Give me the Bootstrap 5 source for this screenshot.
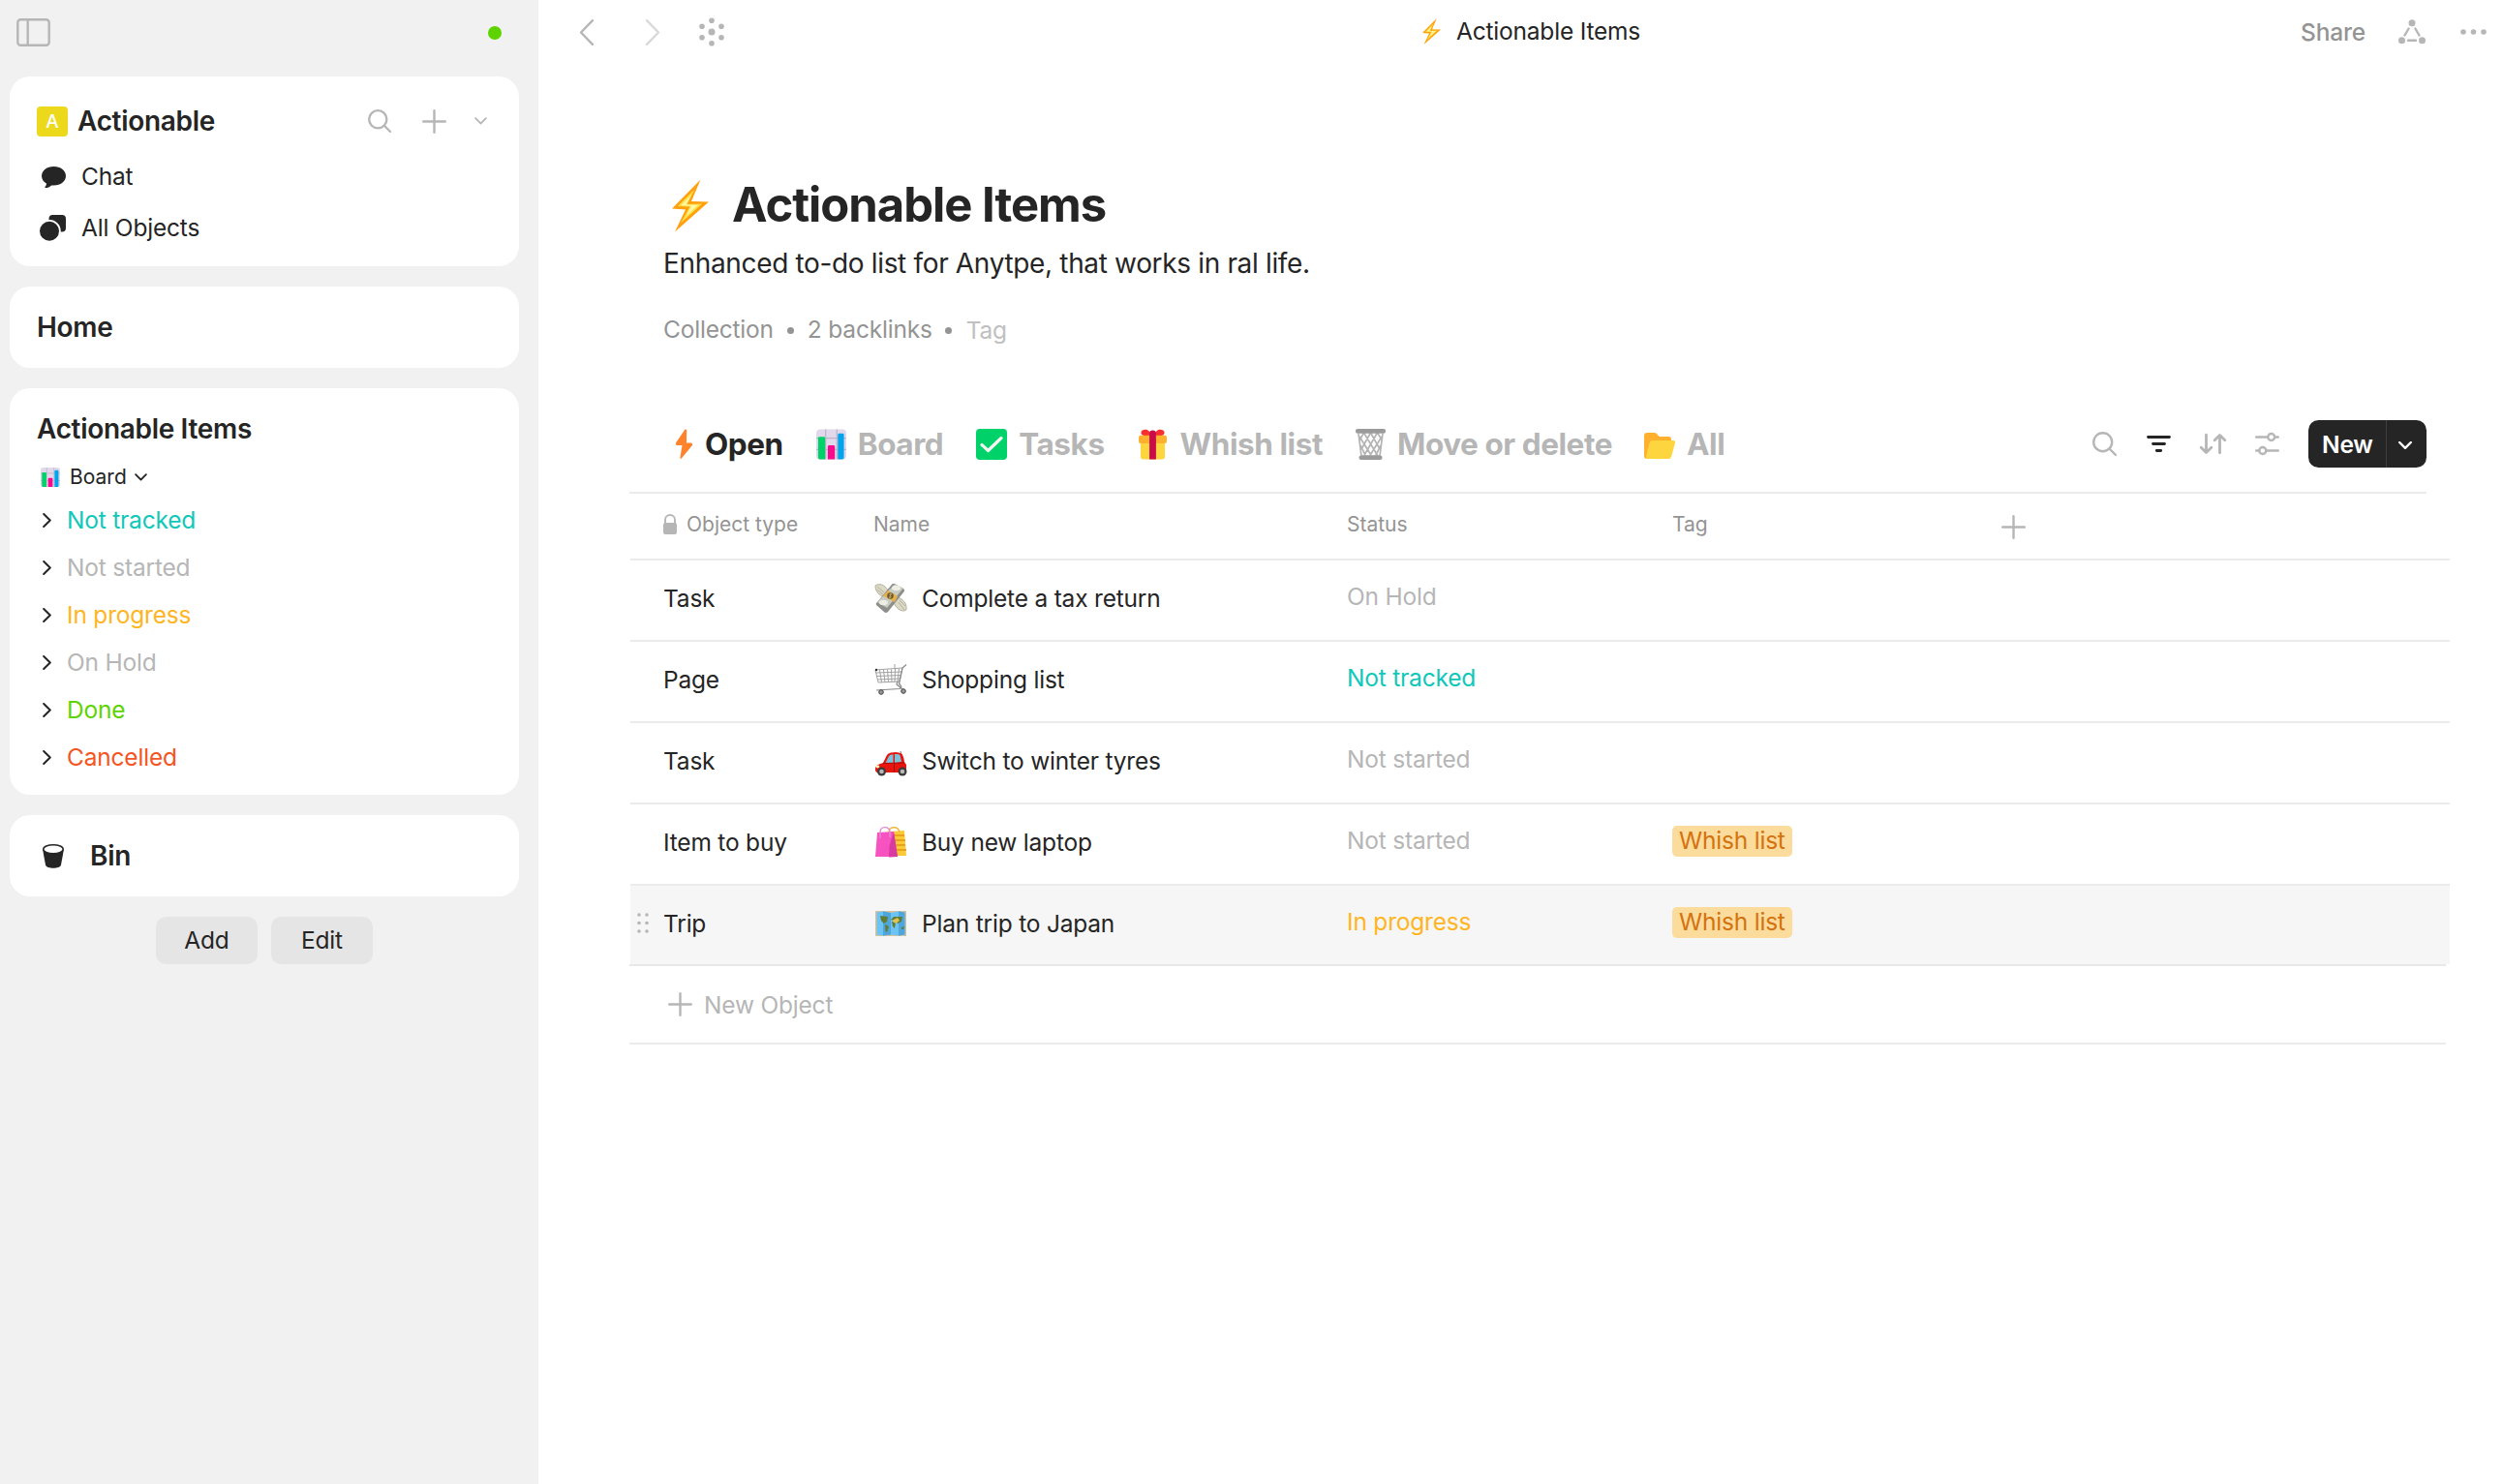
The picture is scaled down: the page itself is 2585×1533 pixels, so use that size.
<!DOCTYPE html>
<html lang="en">
<head>
<meta charset="utf-8">
<meta name="viewport" content="width=device-width, initial-scale=1">
<title>Actionable Items</title>
<link href="https://cdn.jsdelivr.net/npm/bootstrap@5.3.0/dist/css/bootstrap.min.css" rel="stylesheet">
<style>
:root{--ink:#252525;--muted:#949494;--soft:#b6b6b6;--line:#ebebeb}
body{font-family:Inter,"Liberation Sans",sans-serif;font-size:24.5px;line-height:32px;letter-spacing:-.2px;color:var(--ink);background:#fff;overflow:hidden;-webkit-font-smoothing:antialiased}
svg{display:block;flex:none;overflow:visible}
.ico{fill:none;stroke:var(--soft);stroke-width:2.4;stroke-linecap:round;stroke-linejoin:round}
.dk{stroke:var(--ink)}
.side{width:556px;height:1533px;background:#f1f1f1}
.side-head{height:79px;padding:19px 38px 0 17px}
.dot{width:14px;height:14px;border-radius:50%;background:#5dd400;margin-top:8px}
.widget{width:526px;margin:0 0 21px 10px;border-radius:21px;background:#fff;padding:0 28px}
.ttl{font-size:28px;font-weight:600;line-height:36px;letter-spacing:-.32px}
.space-ic{width:32px;height:31px;border-radius:4px;background:#ecd91b;color:#fff;font-size:19px;font-weight:500;line-height:31px}
.nav-l{height:53px}
.grp{height:49px}
.grp span{margin:0 0 1px 16px}
.teal{color:#0fc8ba}.grey{color:var(--soft)}.yel{color:#ffb522}.grn{color:#5dd400}.red{color:#f55522}
.btn-s{width:105px;height:49px;border-radius:10.5px;background:#e5e5e5;color:var(--ink);font-size:24.5px;padding:0;border:0;letter-spacing:-.2px}
.top{height:66px}
.page{padding-left:94px}
h1{font-size:49px;font-weight:700;letter-spacing:-1.04px;line-height:56px;margin:0}
.desc{font-size:28px;line-height:42px;letter-spacing:-.34px;margin-top:11px}
.meta{margin-top:28px;height:38px;color:var(--muted)}
.bul{width:7px;height:7px;border-radius:50%;background:var(--muted);margin-top:2px}
.views{width:1856px;height:76px;margin-top:75px;border-bottom:2px solid var(--line);padding-bottom:25px}
.vtab{font-size:31.5px;font-weight:700;letter-spacing:-.44px;color:var(--soft);line-height:49px;white-space:nowrap}
.new-btn{width:122px;height:49px;border-radius:10.5px;background:var(--ink);color:#fff;font-weight:600;overflow:hidden}
.new-btn .lbl{width:80px;padding-left:14px}
.new-btn .arr{width:42px;height:49px;border-left:1px solid #3f3f3f;padding-right:3px}
.grid{width:1879px;margin-left:1px}
.g-row{height:84px;border-bottom:2px solid var(--line)}
.g-head{height:69px;font-size:21px;letter-spacing:0;color:var(--muted);padding-bottom:4px}
.g-row .c1{width:227px;padding-left:34px}
.g-row .c2{width:489px;padding-left:25px}
.g-row .c3{width:336px;padding-left:24px}
.g-row .c4{width:336px;padding-left:24px}
.g-row:not(.g-head) .c1,.g-row:not(.g-head) .c2{padding-bottom:4px}
.g-row:not(.g-head) .c3{padding-bottom:8px}
.g-row:not(.g-head) .c4{padding-bottom:6px}
.hov{background:#f6f6f6;border-bottom:0}
.g-row.hov{height:81px}
.g-row.hov .c1{padding-left:7px}
.tagp{background:#fcdc9c;color:#d4720f;border-radius:5px;height:32px;padding:0 7px;line-height:31px}
.add{width:1876px;height:83px;border-top:2px solid #e8e8e8;border-bottom:2px solid var(--line);color:var(--soft)}
</style>
</head>
<body>
<svg width="0" height="0" class="position-absolute">
  <symbol id="bolt" viewBox="0 0 38 54">
    <path d="M29.500 0 L0 30 L14 31 L3 54 L38 23 L20 22.500 Z" fill="#ffa00f"/>
    <path d="M23.500 10 L6 27.500 L18.500 28 L9 45 L31 25 L15.500 25.500 Z" fill="#ffe14a"/>
    <path d="M20 16 L9.500 26.500 L20 27.200 L15 37 L27 26.200 L14.500 26 Z" fill="#fff8a8"/>
  </symbol>
  <symbol id="chart" viewBox="0 0 32 32">
    <rect width="32" height="32" rx="4" fill="#e1d8ec"/>
    <path d="M10 0V32M22 0V32M0 9.500H32M0 21.500H32" stroke="#bcb3c6" stroke-width="1.200"/>
    <path d="M2 9.500a1.500 1.500 0 0 1 1.500-1.500h4.500a1.500 1.500 0 0 1 1.500 1.500V32H3.500L2 31Z" fill="#00d26a"/>
    <path d="M12.300 18.500a1.500 1.500 0 0 1 1.500-1.500h4.500a1.500 1.500 0 0 1 1.500 1.500V32H12.300Z" fill="#f70a8d"/>
    <path d="M23 6a1.500 1.500 0 0 1 1.500-1.500H28A1.500 1.500 0 0 1 29.500 6V31L28 32H23Z" fill="#00a6ed"/>
  </symbol>
  <symbol id="down" viewBox="0 0 14 8"><path d="M1.200 1L7 6.800L12.800 1"/></symbol>
  <symbol id="right" viewBox="0 0 9 15"><path d="M1.200 1L7.800 7.500L1.200 14"/></symbol>
  <symbol id="plus" viewBox="0 0 25 25"><path d="M12.500 1.200V23.800M1.200 12.500H23.800"/></symbol>
  <symbol id="mag" viewBox="0 0 25 25"><circle cx="10.700" cy="10.700" r="9.500"/><path d="M17.500 17.500L24 24"/></symbol>
</svg>

<div class="d-flex">
<aside class="side flex-shrink-0">
  <div class="side-head d-flex justify-content-between">
    <svg width="35" height="29" class="ico"><rect x="1.300" y="1.300" width="32.400" height="26.400" rx="3"/><path d="M11.700 1.500V27.500"/></svg>
    <span class="dot"></span>
  </div>

  <section class="widget" style="height:196px">
    <div class="d-flex align-items-center" style="height:92px">
      <span class="space-ic text-center">A</span>
      <span class="ttl" style="margin-left:10px">Actionable</span>
      <svg class="ico ms-auto" width="24" height="24"><use href="#mag"/></svg>
      <svg class="ico" width="25" height="25" style="margin-left:32px"><use href="#plus"/></svg>
      <svg class="ico" width="13" height="8" style="margin:0 5px 1px 29px;stroke-width:1.900"><use href="#down"/></svg>
    </div>
    <div class="nav-l d-flex align-items-center" style="margin-top:-15px">
      <svg width="26" height="22" viewBox="0 0 26 22" class="ms-1" fill="#252525"><path d="M13.500 0C20.500 0 26 4.200 26 9.800S20.500 19.600 13.500 19.600C12.600 19.600 11.900 19.500 11.200 19.400C9.500 21 7.300 22 4.800 22C4.300 22 4.200 21.500 4.500 21.100C5.600 20 6 18.800 5.900 17.600C2.900 15.800 1 13 1 9.800C1 4.200 6.500 0 13.500 0Z"/></svg>
      <span style="margin:0 0 1px 16px">Chat</span>
    </div>
    <div class="nav-l d-flex align-items-center">
      <svg width="27" height="27" viewBox="0 0 27 27" fill="#252525" style="margin-left:3px"><rect x="9.500" y="0" width="17.500" height="17.500" rx="4"/><circle cx="10" cy="16.800" r="11.800" fill="#fff"/><circle cx="10" cy="16.800" r="10"/></svg>
      <span style="margin:0 0 1px 16px">All Objects</span>
    </div>
  </section>

  <section class="widget ttl d-flex align-items-center" style="height:84px">Home</section>

  <section class="widget" style="height:420px;padding-top:24px">
    <div class="ttl">Actionable Items</div>
    <div class="d-flex align-items-center" style="font-size:21px;letter-spacing:0;height:28px;margin-top:18px;padding-left:4px">
      <svg width="20" height="20"><use href="#chart"/></svg>
      <span style="margin-left:10px">Board</span>
      <svg class="ico dk" width="13" height="8" style="margin-left:8px;stroke-width:2"><use href="#down"/></svg>
    </div>
    <div style="padding:6px 0 0 6px">
      <div class="grp d-flex align-items-center"><svg class="ico dk" width="9" height="15" style="stroke-width:2"><use href="#right"/></svg><span class="teal">Not tracked</span></div>
      <div class="grp d-flex align-items-center"><svg class="ico dk" width="9" height="15" style="stroke-width:2"><use href="#right"/></svg><span class="grey">Not started</span></div>
      <div class="grp d-flex align-items-center"><svg class="ico dk" width="9" height="15" style="stroke-width:2"><use href="#right"/></svg><span class="yel">In progress</span></div>
      <div class="grp d-flex align-items-center"><svg class="ico dk" width="9" height="15" style="stroke-width:2"><use href="#right"/></svg><span class="grey">On Hold</span></div>
      <div class="grp d-flex align-items-center"><svg class="ico dk" width="9" height="15" style="stroke-width:2"><use href="#right"/></svg><span class="grn">Done</span></div>
      <div class="grp d-flex align-items-center"><svg class="ico dk" width="9" height="15" style="stroke-width:2"><use href="#right"/></svg><span class="red">Cancelled</span></div>
    </div>
  </section>

  <section class="widget d-flex align-items-center" style="height:84px">
    <svg width="22" height="25" viewBox="0 0 22 25" style="margin-left:6px"><path d="M0 5L3 21.500C4 25.800 18 25.800 19 21.500L22 5Z" fill="#252525"/><ellipse cx="11" cy="5.200" rx="10.200" ry="4.500" fill="#fff" stroke="#252525" stroke-width="1.500"/></svg>
    <span class="ttl" style="margin-left:27px">Bin</span>
  </section>

  <div class="d-flex justify-content-center" style="gap:14px;padding-right:10px">
    <button class="btn btn-s">Add</button>
    <button class="btn btn-s">Edit</button>
  </div>
</aside>

<main class="flex-grow-1">
  <header class="top d-flex align-items-center">
    <svg class="ico" width="15" height="27" style="margin-left:42px"><path d="M14 1.200L2 13.500L14 25.800"/></svg>
    <svg class="ico" width="15" height="27" style="margin-left:54px;stroke:#d9d9d9"><path d="M1 1.200L13 13.500L1 25.800"/></svg>
    <svg width="26" height="30" viewBox="-13 -15 26 30" fill="#b6b6b6" style="margin-left:40px"><circle r="3.500"/><circle cy="-11.700" r="2.800"/><circle cy="11.700" r="2.800"/><circle cx="-10" cy="-5.800" r="2.800"/><circle cx="-10" cy="5.800" r="2.800"/><circle cx="10" cy="-5.800" r="2.800"/><circle cx="10" cy="5.800" r="2.800"/></svg>
    <svg width="19" height="27" style="margin:0 0 1px 721px"><use href="#bolt"/></svg>
    <span style="margin:0 0 2px 16px">Actionable Items</span>
    <div class="ms-auto d-flex align-items-center" style="padding-right:16px">
      <span style="color:var(--muted);font-weight:500">Share</span>
      <svg class="ico" width="28" height="26" style="margin-left:34px"><g fill="#b6b6b6" stroke="none"><circle cx="14" cy="3.700" r="3.500"/><circle cx="3.500" cy="21.700" r="3.500"/><circle cx="24.500" cy="21.700" r="3.500"/></g><path d="M10.600 9.500L6.500 16.500M17.400 9.500L21.500 16.500M10 21.700H18"/></svg>
      <svg width="28" height="6" fill="#b6b6b6" style="margin-left:36px"><circle cx="3" cy="3" r="2.800"/><circle cx="13.500" cy="3" r="2.800"/><circle cx="24" cy="3" r="2.800"/></svg>
    </div>
  </header>

  <div class="page">
    <div class="d-flex align-items-center" style="padding:118px 0 0 44px">
      <svg width="38" height="55"><use href="#bolt"/></svg>
      <h1 style="margin-left:24px">Actionable Items</h1>
    </div>
    <div class="desc" style="padding-left:35px">Enhanced to-do list for Anytpe, that works in ral life.</div>
    <div class="meta d-flex align-items-center" style="padding-left:35px">
      <span>Collection</span><i class="bul" style="margin-left:14px"></i>
      <span style="margin-left:14px">2 backlinks</span><i class="bul" style="margin-left:13px"></i>
      <span class="grey" style="margin:2px 0 0 15px;opacity:.85">Tag</span>
    </div>

    <div class="views d-flex align-items-center">
      <div class="vtab d-flex align-items-center" style="margin-left:47px;color:var(--ink)">
        <svg width="19" height="31" viewBox="0 0 19 31"><path d="M10.500 .6L1 14.500Q.3 16.500 2 17H7.500L5.300 30.500Q6 31.300 7 30.300L18 17Q18.500 15 17 14.500H12L12.200 1Q11.500 0 10.500 .6Z" fill="#ff822d"/></svg>
        <span style="margin-left:12px">Open</span>
      </div>
      <div class="vtab d-flex align-items-center" style="margin-left:34px">
        <svg width="31" height="32"><use href="#chart"/></svg>
        <span style="margin-left:12px">Board</span>
      </div>
      <div class="vtab d-flex align-items-center" style="margin-left:34px">
        <svg width="32" height="32"><rect width="32" height="32" rx="4" fill="#00d26a"/><path d="M6 16.500L12.500 22.500L26 9.500" fill="none" stroke="#f4f4f4" stroke-width="3.200" stroke-linecap="round" stroke-linejoin="round"/></svg>
        <span style="margin-left:12px">Tasks</span>
      </div>
      <div class="vtab d-flex align-items-center" style="margin-left:35px">
        <svg width="29" height="32" viewBox="0 0 30 32"><path d="M2 12H28V29a3 3 0 0 1-3 3H5a3 3 0 0 1-3-3Z" fill="#fcd53f"/><path d="M14 6.500C7 8 2.500 6.500 2.500 3.500C2.500 .5 8 -.8 10.500 1.500C12.500 3 14 5 14 6.500ZM16 6.500C23 8 27.500 6.500 27.500 3.500C27.500 .5 22 -.8 19.500 1.500C17.500 3 16 5 16 6.500Z" fill="#f92f2f"/><rect y="6.500" width="30" height="8.500" rx="2" fill="#ffb02e"/><path d="M11.500 32V4.500a3.500 3.500 0 0 1 7 0V32Z" fill="#ca0b4a"/></svg>
        <span style="margin-left:14px">Whish list</span>
      </div>
      <div class="vtab d-flex align-items-center" style="margin-left:34px">
        <svg width="31" height="32" viewBox="0 0 31 32"><path d="M3 5L6 28H25L28 5M8.500 4L23 28M15.500 4L25 21M22.500 4L27.500 12M4 8L16.500 28M5 17L10.500 28M22.500 4L8.500 28M15.500 4L6 21M8.500 4L4 12M27 8L14.500 28M26 17L20.500 28" fill="none" stroke="#b4b4b4" stroke-width="1.700"/><rect width="31" height="4.800" rx="2" fill="#9b9b9b"/><rect x="3.500" y="27.500" width="24" height="4.500" rx="2" fill="#9b9b9b"/></svg>
        <span style="margin-left:12px">Move or delete</span>
      </div>
      <div class="vtab d-flex align-items-center" style="margin-left:33px">
        <svg width="32" height="27" viewBox="0 0 32 27" style="margin-top:4px"><path d="M0 3a3 3 0 0 1 3-3H11Q12.500 0 13.500 1.500L15.500 4H25a3 3 0 0 1 3 3V16L4 27H3a3 3 0 0 1-3-3Z" fill="#ffb02e"/><path d="M8.500 8H30Q32.500 8 32 10.500L28 25Q27.500 27 25.500 27H3Q1.500 27 2 24.500L5.500 10.500Q6 8 8.500 8Z" fill="#fcd53f"/></svg>
        <span style="margin-left:12px">All</span>
      </div>
      <div class="ms-auto d-flex align-items-center">
        <svg class="ico" width="25" height="25"><use href="#mag"/></svg>
        <svg class="ico dk" width="25" height="17" style="margin-left:31px;stroke-width:2.800"><path d="M1.500 1.500H23.500M6.500 8.500H18.500M10.300 15.500H14.700"/></svg>
        <svg class="ico" width="27" height="21" style="margin-left:30px;stroke-width:2.800"><path d="M6.500 1.200V19M1.200 14.200L6.500 19.500L11.800 14.200M20.500 19.800V2M15.200 6.800L20.500 1.500L25.800 6.800"/></svg>
        <svg class="ico" width="25" height="23" style="margin-left:30px"><path d="M1.200 4.500H13M20.500 4.500H23.800M1.200 18.500H4M12 18.500H23.800"/><circle cx="16.700" cy="4.500" r="3.500"/><circle cx="7.800" cy="18.500" r="3.500"/></svg>
        <div class="new-btn d-flex align-items-center" style="margin-left:30px">
          <span class="lbl">New</span>
          <span class="arr d-flex align-items-center justify-content-center"><svg class="ico" width="14" height="8" style="stroke:#fff;margin-top:3px"><use href="#down"/></svg></span>
        </div>
      </div>
    </div>

    <div class="grid">
      <div class="g-row g-head d-flex align-items-center">
        <div class="c1 d-flex align-items-center"><svg width="14" height="21" viewBox="0 0 14 21"><path d="M2 10V6a5 5 0 0 1 10 0V10" fill="none" stroke="#b6b6b6" stroke-width="1.900"/><rect y="9" width="14" height="12" rx="2" fill="#b6b6b6"/></svg><span style="margin-left:10px">Object type</span></div>
        <div class="c2" style="padding-left:24px">Name</div>
        <div class="c3">Status</div>
        <div class="c4">Tag</div>
        <svg class="ico" width="25" height="25" style="margin:6px 0 0 28px"><use href="#plus"/></svg>
      </div>
      <div class="g-row d-flex align-items-center">
        <div class="c1">Task</div>
        <div class="c2 d-flex align-items-center">
          <svg width="34" height="32" viewBox="0 0 34 32"><path d="M1 3C5 0 11 2 14 8L11 14C5 14 1 9 1 3ZM33 28C29 31 23 27 20 21L23 15C29 16 34 21 33 28Z" fill="#dcdac6" stroke="#b5b3a0"/><path d="M3 4L10 10M2.500 7L9 12M31 28L25 20M32 24L26 18" stroke="#b5b3a0"/><path d="M21 1L30 6Q32 8 30 10L14 30Q12 32 10 30L2 23Q1 21 3 20L17 3Q19 0 21 1Z" fill="#8e8f8a"/><path d="M21 1.500L30 5.500L13 26L3 20Z" fill="#c8cbc2"/><ellipse cx="22.500" cy="5.500" rx="4.500" ry="2.800" fill="#eceee6"/><ellipse cx="9.500" cy="20.500" rx="4.500" ry="2.800" fill="#eceee6"/><path d="M14 8L24 14L21 20L9 13.500Z" fill="#e4b14b"/><circle cx="16.500" cy="13.500" r="3.300" fill="#6d5a35"/><path d="M18 12Q15 11 16.500 13.500T15 15" stroke="#e9c66c" fill="none"/></svg>
          <span style="margin-left:15px">Complete a tax return</span></div>
        <div class="c3 grey">On Hold</div>
      </div>
      <div class="g-row d-flex align-items-center">
        <div class="c1">Page</div>
        <div class="c2 d-flex align-items-center">
          <svg width="34" height="32" viewBox="0 0 34 32" fill="none" stroke="#a2a2a2"><path d="M1 6L4 19L26 18L29 4M1 6L29 4M1.500 9L28 8M2.500 12.500L27.500 11.500M3.500 16L26.500 15M5.500 6L7.500 19M9.500 6L11 19M13.500 5.500L14.500 19M17.500 5.500L18 18.500M21.500 5L21 18.500M25.500 4.500L24 18.500M21 0V5"/><path d="M33 .5L29 4L26 18Q25 21 27 22Q29 24 26 25.500L2 27M24 18L23 21L29 26" stroke="#888" stroke-width="1.200"/><circle cx="7" cy="29" r="2.300" fill="#999" stroke="#444"/><circle cx="30" cy="28" r="2.300" fill="#999" stroke="#444"/><circle cx="2" cy="6" r="1.200" fill="#333" stroke="none"/></svg>
          <span style="margin-left:15px">Shopping list</span></div>
        <div class="c3 teal">Not tracked</div>
      </div>
      <div class="g-row d-flex align-items-center">
        <div class="c1">Task</div>
        <div class="c2 d-flex align-items-center">
          <svg width="34" height="26" viewBox="0 0 34 26" style="margin-top:5px"><path d="M28 5L27 0" stroke="#777"/><path d="M9 12L13 4Q14 2 17 1.500Q24 0 28 2.500Q30 4 31 11L33 14V19Q33 21 31 22H3Q.5 21 1 18Q1 14 9 12Z" fill="#e8150f"/><path d="M11.500 12L15 5Q16 3.500 19.500 3.200V12ZM21 3Q25 2.500 26.500 4L28 11L21 12Z" fill="#7cc1d8"/><path d="M20.500 12V22M9 12.500L31 12" stroke="#a90b08"/><ellipse cx="3.500" cy="16" rx="1.800" ry="1.400" fill="#fff3b0"/><g fill="#3b3b3b"><circle cx="7.500" cy="21" r="4.500"/><circle cx="29" cy="21" r="4.500"/></g><g fill="#b8b8b8"><circle cx="7.500" cy="21" r="2.300"/><circle cx="29" cy="21" r="2.300"/></g></svg>
          <span style="margin-left:15px">Switch to winter tyres</span></div>
        <div class="c3 grey">Not started</div>
      </div>
      <div class="g-row d-flex align-items-center">
        <div class="c1">Item to buy</div>
        <div class="c2 d-flex align-items-center">
          <svg width="34" height="32" viewBox="0 0 34 32"><path d="M15 5L31 4L33 30H20Z" fill="#fcc938"/><path d="M18 9H31M18 14H32M19 19H32M20 24H33" stroke="#e9a21b" stroke-width="2"/><path d="M15 6C15 -1 25 -1 26 6" fill="none" stroke="#eeb73c" stroke-width="1.400"/><path d="M3 6L20 5L24 31L1 31Z" fill="#f652c0"/><path d="M20 5L24 31L15 31.500L15.500 20Z" fill="#d83a9f"/><path d="M6 12V6C6 -1 15 -1 16 5V11" fill="none" stroke="#e08ad0" stroke-width="1.400"/></svg>
          <span style="margin-left:15px">Buy new laptop</span></div>
        <div class="c3 grey">Not started</div>
        <div class="c4 d-flex"><span class="tagp">Whish list</span></div>
      </div>
      <div class="g-row hov d-flex align-items-center">
        <div class="c1 d-flex align-items-center"><svg width="12" height="21" fill="#b6b6b6"><circle cx="2" cy="2" r="1.800"/><circle cx="10" cy="2" r="1.800"/><circle cx="2" cy="10.500" r="1.800"/><circle cx="10" cy="10.500" r="1.800"/><circle cx="2" cy="19" r="1.800"/><circle cx="10" cy="19" r="1.800"/></svg><span style="margin-left:15px">Trip</span></div>
        <div class="c2 d-flex align-items-center">
          <svg width="34" height="28" viewBox="0 0 34 28"><path d="M1 1H33V27H1Z" fill="#d2c1a0"/><path d="M2.500 2.500L9 1.500L17 3L25 1.500L31.500 2.500V25.500L25 26.500L17 25.500L9 26.500L2.500 25.500Z" fill="#6cc4f5"/><path d="M9 1.500L17 3V25.500L9 26.500ZM25 1.500L31.500 2.500V25.500L25 26.500Z" fill="#4ea6dd"/><path d="M6 6L14 7L13 12L10 14L7 11ZM11 15L15 17L13 23L11.500 22ZM17 10L20 7L29 7L28 12L24 14L22 12ZM18 12L22 13L21 19L19 17ZM28 18L31 17L30 20L28 20Z" fill="#607c35"/><path d="M18 11L24 8L26 11L22 14Z" fill="#e2c455"/></svg>
          <span style="margin-left:15px">Plan trip to Japan</span></div>
        <div class="c3 yel">In progress</div>
        <div class="c4 d-flex"><span class="tagp">Whish list</span></div>
      </div>
    </div>
    <div class="add d-flex align-items-center">
      <svg class="ico" width="25" height="25" style="margin-left:40px"><use href="#plus"/></svg>
      <span style="margin-left:12px">New Object</span>
    </div>
  </div>
</main>
</div>
<script src="https://cdn.jsdelivr.net/npm/bootstrap@5.3.0/dist/js/bootstrap.bundle.min.js"></script>
</body>
</html>
